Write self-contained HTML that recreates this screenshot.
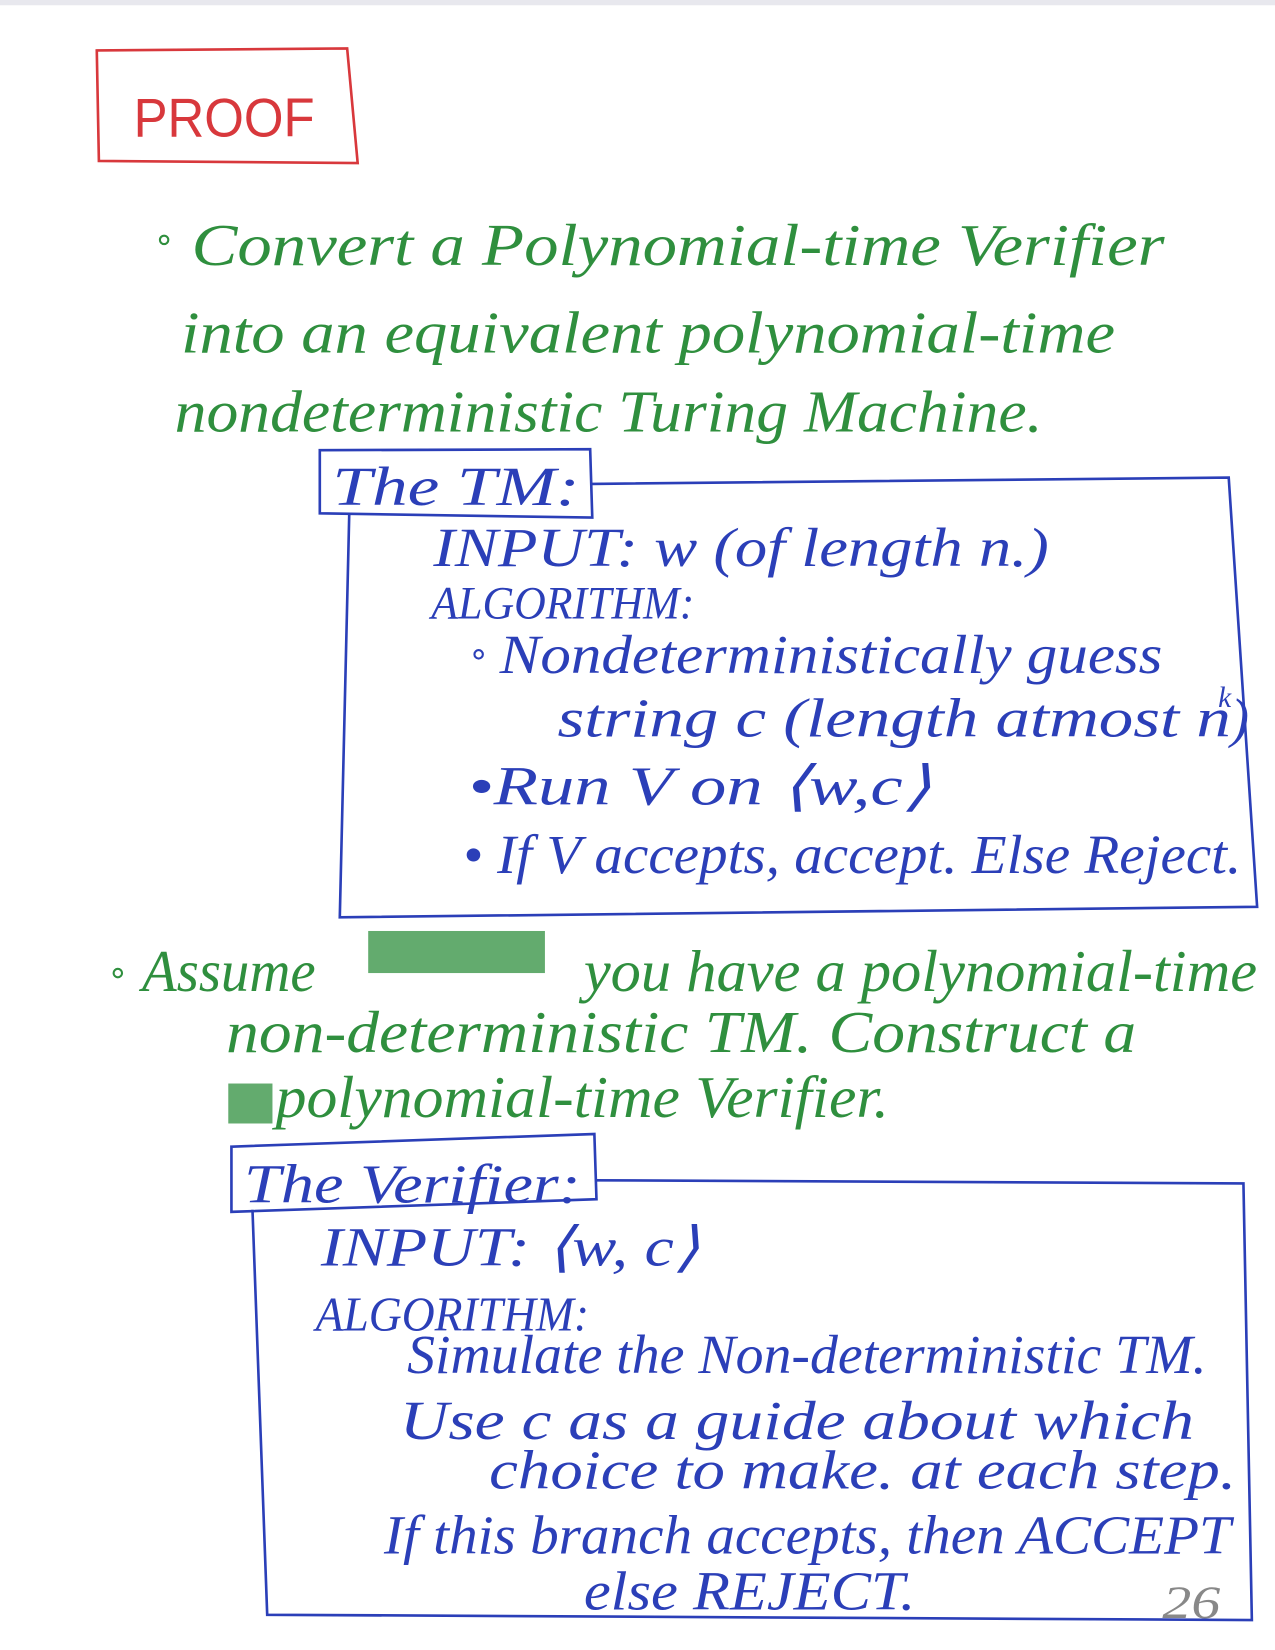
<!DOCTYPE html>
<html><head><meta charset="utf-8"><style>
html,body{margin:0;padding:0;background:#fff;}
svg{display:block}
text{font-family:"Liberation Serif",serif;font-style:italic;}
.g{fill:#2f8f3e}
.b{fill:#2b3fb8}
</style></head><body>
<svg width="1275" height="1650" viewBox="0 0 1212 1568.5" preserveAspectRatio="none" xmlns="http://www.w3.org/2000/svg">
<rect width="1212" height="1570" fill="#fff"/>
<rect x="0" y="0" width="1212" height="5" fill="#e8e8ee"/>
<path d="M92 48 L330 46 L340 155 L94 153 Z" fill="none" stroke="#d8383c" stroke-width="2.5"/>
<text x="127" y="130" fill="#d8383c" style="font-style:normal;font-family:'Liberation Sans',sans-serif" font-size="52" textLength="172" lengthAdjust="spacingAndGlyphs">PROOF</text>
<g class="g" font-size="56">
<circle cx="156" cy="228" r="4" fill="none" stroke="#2f8f3e" stroke-width="2"/>
<text x="182" y="252" textLength="925" lengthAdjust="spacingAndGlyphs">Convert a Polynomial-time Verifier</text>
<text x="172" y="335" textLength="888" lengthAdjust="spacingAndGlyphs">into an equivalent polynomial-time</text>
<text x="166" y="410" textLength="825" lengthAdjust="spacingAndGlyphs">nondeterministic Turing Machine.</text>
</g>
<g fill="none" stroke="#2b3fb8" stroke-width="2.5">
<path d="M304 428 L561 427 L563 492 L304 488 Z"/>
<path d="M563 460 L1168 454 L1195 862 L323 872 L332 488"/>
<path d="M566 1122 L1182 1125 L1190 1540 L254 1535 L240 1150"/>
<path d="M220 1090 L565 1078 L567 1140 L220 1152 Z"/>
</g>
<g class="b" font-size="52">
<text x="316" y="480" textLength="235" lengthAdjust="spacingAndGlyphs">The TM:</text>
<text x="412" y="538" textLength="585" lengthAdjust="spacingAndGlyphs">INPUT: w (of length n.)</text>
<text x="410" y="588" textLength="250" lengthAdjust="spacingAndGlyphs" font-size="44">ALGORITHM:</text>
<circle cx="455" cy="622" r="4" fill="none" stroke="#2b3fb8" stroke-width="2"/>
<text x="475" y="640" textLength="630" lengthAdjust="spacingAndGlyphs">Nondeterministically guess</text>
<text x="530" y="700" textLength="640" lengthAdjust="spacingAndGlyphs">string c (length atmost n</text>
<text x="1158" y="672" font-size="28">k</text>
<text x="1170" y="700">)</text>
<text x="445" y="765" textLength="440" lengthAdjust="spacingAndGlyphs">•Run V on ⟨w,c⟩</text>
<text x="440" y="830" textLength="740" lengthAdjust="spacingAndGlyphs">• If V accepts, accept. Else Reject.</text>
</g>
<g class="g" font-size="56">
<circle cx="112" cy="925" r="4" fill="none" stroke="#2f8f3e" stroke-width="2"/>
<text x="135" y="942" textLength="165" lengthAdjust="spacingAndGlyphs">Assume</text>
<rect x="350" y="885" width="168" height="40" fill="#2f8f3e" opacity="0.75"/>
<text x="555" y="942" textLength="640" lengthAdjust="spacingAndGlyphs">you have a polynomial-time</text>
<text x="215" y="1000" textLength="865" lengthAdjust="spacingAndGlyphs">non-deterministic TM. Construct a</text>
<rect x="217" y="1030" width="42" height="38" fill="#2f8f3e" opacity="0.75"/>
<text x="262" y="1062" textLength="583" lengthAdjust="spacingAndGlyphs">polynomial-time Verifier.</text>
</g>
<g class="b" font-size="52">
<text x="232" y="1143" textLength="320" lengthAdjust="spacingAndGlyphs">The Verifier:</text>
<text x="305" y="1203" textLength="360" lengthAdjust="spacingAndGlyphs">INPUT: ⟨w, c⟩</text>
<text x="300" y="1265" textLength="260" lengthAdjust="spacingAndGlyphs" font-size="46">ALGORITHM:</text>
<text x="387" y="1305" textLength="760" lengthAdjust="spacingAndGlyphs">Simulate the Non-deterministic TM.</text>
<text x="380" y="1368" textLength="755" lengthAdjust="spacingAndGlyphs">Use c as a guide about which</text>
<text x="465" y="1415" textLength="710" lengthAdjust="spacingAndGlyphs">choice to make. at each step.</text>
<text x="365" y="1477" textLength="805" lengthAdjust="spacingAndGlyphs">If this branch accepts, then ACCEPT</text>
<text x="555" y="1530" textLength="315" lengthAdjust="spacingAndGlyphs">else REJECT.</text>
</g>
<text x="1105" y="1538" fill="#888" font-size="44" textLength="55" lengthAdjust="spacingAndGlyphs">26</text>
</svg>
</body></html>
